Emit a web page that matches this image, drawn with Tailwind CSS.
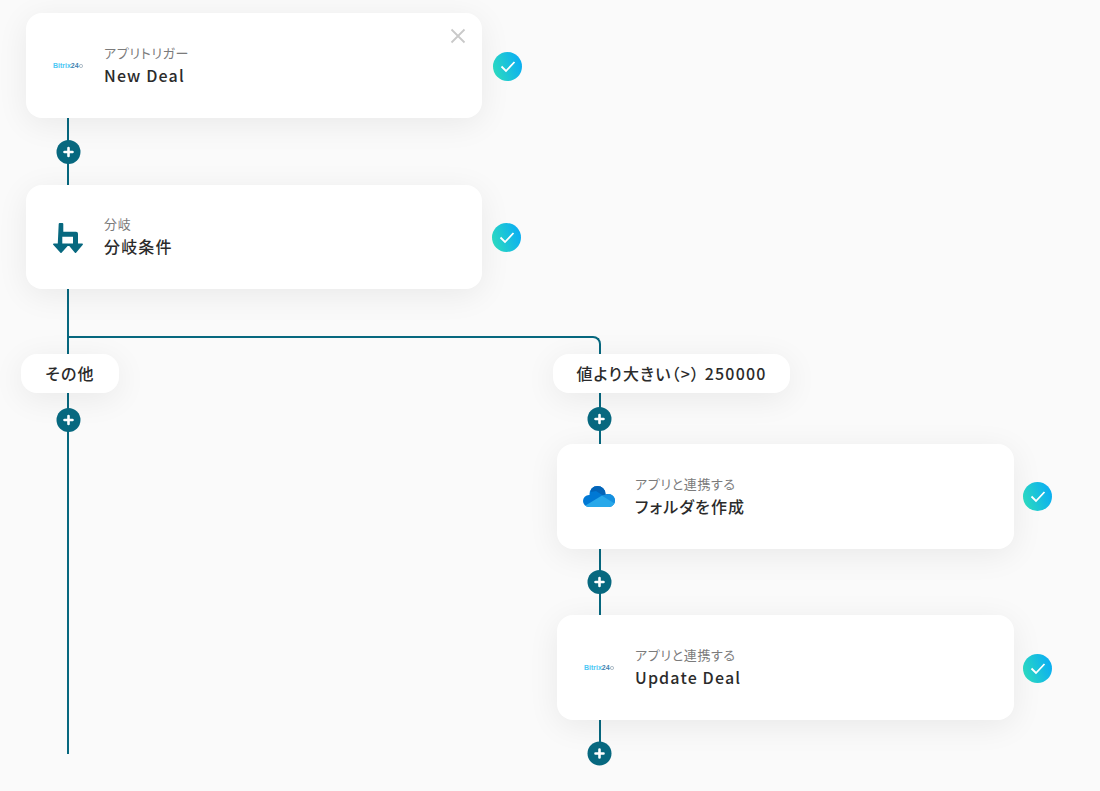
<!DOCTYPE html>
<html lang="ja">
<head>
    <meta charset="UTF-8">
    <title>Flow</title>
    <script src="https://cdn.jsdelivr.net/npm/@tailwindcss/browser@4"></script>
</head>
<body class="bg-[#fafafa] text-[#2b2b2b] font-['Noto_Sans_CJK_JP','Noto_Sans',sans-serif] [font-feature-settings:'palt']">
<div class="relative w-[1100px] h-[791px] overflow-hidden">

    <!-- connector lines -->
    <div class="absolute left-[67px] top-[118px] w-[2px] h-[636px] bg-[#07687f]"></div>
    <div class="absolute left-[68px] top-[336px] w-[533px] h-[20px] border-t-2 border-r-2 border-[#07687f] rounded-tr-[8px]"></div>
    <div class="absolute left-[599px] top-[390px] w-[2px] h-[363px] bg-[#07687f]"></div>

    <!-- New Deal -->
    <div class="absolute left-[26px] top-[13px] w-[456px] h-[105px] bg-white rounded-2xl shadow-[0_6px_32px_rgba(0,0,0,0.07)] flex items-center">
        <div class="w-[78px] flex justify-center">
            <span class="flex items-center text-[7px] font-bold leading-none font-['Liberation_Sans',sans-serif] text-[#4cc8f4] ml-[6px]">Bitrix<span class="text-[#3f7fb0]">24</span><svg class="ml-[0.5px]" width="4" height="4" viewBox="0 0 4 4" fill="none" stroke="#8fa3b3" stroke-width="0.7"><circle cx="2" cy="2" r="1.600"/></svg></span>
        </div>
        <div class="flex flex-col pb-[2px]">
            <span class="text-[13px] leading-[18px] pt-[2px] tracking-[0.05em] text-[#7b7b7b]">アプリトリガー</span>
            <span class="text-[16px] leading-[26px] font-medium tracking-[1.15px]">New Deal</span>
        </div>
        <svg class="absolute right-[16px] top-[14.5px]" width="16" height="16" viewBox="0 0 16 16" fill="none" stroke="#c9c9c9" stroke-width="1.8"><path d="M1.5 1.5l13 13M14.5 1.5l-13 13"/></svg>
    </div>

    <!-- 分岐 -->
    <div class="absolute left-[26px] top-[185px] w-[456px] h-[104px] bg-white rounded-2xl shadow-[0_6px_32px_rgba(0,0,0,0.07)] flex items-center">
        <div class="w-[78px] flex justify-center">
            <svg class="ml-[6px] mt-[1px]" width="30" height="30" viewBox="0 0 30 30" fill="#07687f" stroke="#07687f" stroke-linejoin="round">
                <path stroke="none" d="M5.700 1a1 1 0 0 1 1-1h2.600a1 1 0 0 1 1 1v7.700h12.700a2 2 0 0 1 2 2V22h-5V13.700h-10.700V22h-4.600z"/>
                <path stroke-width="1.500" d="M.8 21.200h14.400l-7.200 8zM15.800 21.200h13.400l-6.700 8z"/>
            </svg>
        </div>
        <div class="flex flex-col pb-[2px]">
            <span class="text-[13px] leading-[18px] pt-[2px] tracking-[0.05em] text-[#7b7b7b]">分岐</span>
            <span class="text-[16px] leading-[26px] font-medium tracking-[1.15px]">分岐条件</span>
        </div>
    </div>

    <!-- branch labels -->
    <div class="absolute left-[21px] top-[354px] w-[98px] h-[39px] bg-white rounded-2xl shadow-[0_6px_32px_rgba(0,0,0,0.07)] flex items-center justify-center pb-[2px] text-[16px] tracking-[1.15px] font-medium">その他</div>
    <div class="absolute left-[553px] top-[354px] w-[237px] h-[39px] bg-white rounded-2xl shadow-[0_6px_32px_rgba(0,0,0,0.07)] flex items-center justify-center pb-[2px] text-[16px] tracking-[1.15px] font-medium whitespace-nowrap">値より大きい（&gt;） 250000</div>

    <!-- フォルダを作成 -->
    <div class="absolute left-[557px] top-[444px] w-[457px] h-[105px] bg-white rounded-2xl shadow-[0_6px_32px_rgba(0,0,0,0.07)] flex items-center">
        <div class="w-[78px] flex justify-center">
            <svg class="ml-[6px]" width="32" height="21" viewBox="0 0 32 21">
                <defs>
                    <clipPath id="cloud">
                        <circle cx="14.500" cy="8" r="8"/>
                        <circle cx="6" cy="15" r="6"/>
                        <circle cx="25.500" cy="14.500" r="6.500"/>
                        <rect x="6" y="10" width="20" height="11"/>
                    </clipPath>
                </defs>
                <g clip-path="url(#cloud)">
                    <rect width="32" height="21" fill="#0078d4"/>
                    <path fill="#0364b8" d="M8 0h16l3 8-7 1.500-7-4.500-5 1z"/>
                    <path fill="#1490df" d="M19 9.500l8-2 5 3v8z"/>
                    <path fill="#28a8ea" d="M-1 21.500l20-12 14 9v3z"/>
                </g>
            </svg>
        </div>
        <div class="flex flex-col pb-[2px]">
            <span class="text-[13px] leading-[18px] pt-[2px] tracking-[0.05em] text-[#7b7b7b]">アプリと連携する</span>
            <span class="text-[16px] leading-[26px] font-medium tracking-[1.15px]">フォルダを作成</span>
        </div>
    </div>

    <!-- Update Deal -->
    <div class="absolute left-[557px] top-[615px] w-[457px] h-[105px] bg-white rounded-2xl shadow-[0_6px_32px_rgba(0,0,0,0.07)] flex items-center">
        <div class="w-[78px] flex justify-center">
            <span class="flex items-center text-[7px] font-bold leading-none font-['Liberation_Sans',sans-serif] text-[#4cc8f4] ml-[6px]">Bitrix<span class="text-[#3f7fb0]">24</span><svg class="ml-[0.5px]" width="4" height="4" viewBox="0 0 4 4" fill="none" stroke="#8fa3b3" stroke-width="0.7"><circle cx="2" cy="2" r="1.600"/></svg></span>
        </div>
        <div class="flex flex-col pb-[2px]">
            <span class="text-[13px] leading-[18px] pt-[2px] tracking-[0.05em] text-[#7b7b7b]">アプリと連携する</span>
            <span class="text-[16px] leading-[26px] font-medium tracking-[1.15px]">Update Deal</span>
        </div>
    </div>

    <!-- plus buttons -->
    <div class="absolute left-[56px] top-[140px] translate-x-[0.5px] w-6 h-6 rounded-full bg-[#07687f] flex items-center justify-center"><svg width="12" height="12" viewBox="0 0 12 12" stroke="#fff" stroke-width="2.600" stroke-linecap="round"><path d="M6 2v8M2 6h8"/></svg></div>
    <div class="absolute left-[56px] top-[408px] translate-x-[0.5px] w-6 h-6 rounded-full bg-[#07687f] flex items-center justify-center"><svg width="12" height="12" viewBox="0 0 12 12" stroke="#fff" stroke-width="2.600" stroke-linecap="round"><path d="M6 2v8M2 6h8"/></svg></div>
    <div class="absolute left-[587px] top-[407px] translate-x-[0.5px] w-6 h-6 rounded-full bg-[#07687f] flex items-center justify-center"><svg width="12" height="12" viewBox="0 0 12 12" stroke="#fff" stroke-width="2.600" stroke-linecap="round"><path d="M6 2v8M2 6h8"/></svg></div>
    <div class="absolute left-[587px] top-[570px] translate-x-[0.5px] w-6 h-6 rounded-full bg-[#07687f] flex items-center justify-center"><svg width="12" height="12" viewBox="0 0 12 12" stroke="#fff" stroke-width="2.600" stroke-linecap="round"><path d="M6 2v8M2 6h8"/></svg></div>
    <div class="absolute left-[587px] top-[741px] translate-x-[0.5px] translate-y-[0.5px] w-6 h-6 rounded-full bg-[#07687f] flex items-center justify-center"><svg width="12" height="12" viewBox="0 0 12 12" stroke="#fff" stroke-width="2.600" stroke-linecap="round"><path d="M6 2v8M2 6h8"/></svg></div>

    <!-- status checks -->
    <div class="absolute left-[493px] top-[52px] w-[29px] h-[29px] rounded-full bg-[linear-gradient(70deg,#2bd9c0_10%,#0cb0f0_85%)] flex items-center justify-center"><svg width="16" height="13" viewBox="0 0 16 13" fill="none" stroke="#fff" stroke-width="1.800"><path d="M1.500 6.500l4.500 4.500 8.500-9"/></svg></div>
    <div class="absolute left-[492px] top-[223px] w-[29px] h-[29px] rounded-full bg-[linear-gradient(70deg,#2bd9c0_10%,#0cb0f0_85%)] flex items-center justify-center"><svg width="16" height="13" viewBox="0 0 16 13" fill="none" stroke="#fff" stroke-width="1.800"><path d="M1.500 6.500l4.500 4.500 8.500-9"/></svg></div>
    <div class="absolute left-[1023px] top-[482px] w-[29px] h-[29px] rounded-full bg-[linear-gradient(70deg,#2bd9c0_10%,#0cb0f0_85%)] flex items-center justify-center"><svg width="16" height="13" viewBox="0 0 16 13" fill="none" stroke="#fff" stroke-width="1.800"><path d="M1.500 6.500l4.500 4.500 8.500-9"/></svg></div>
    <div class="absolute left-[1023px] top-[654px] w-[29px] h-[29px] rounded-full bg-[linear-gradient(70deg,#2bd9c0_10%,#0cb0f0_85%)] flex items-center justify-center"><svg width="16" height="13" viewBox="0 0 16 13" fill="none" stroke="#fff" stroke-width="1.800"><path d="M1.500 6.500l4.500 4.500 8.500-9"/></svg></div>
</div>
</body>
</html>
